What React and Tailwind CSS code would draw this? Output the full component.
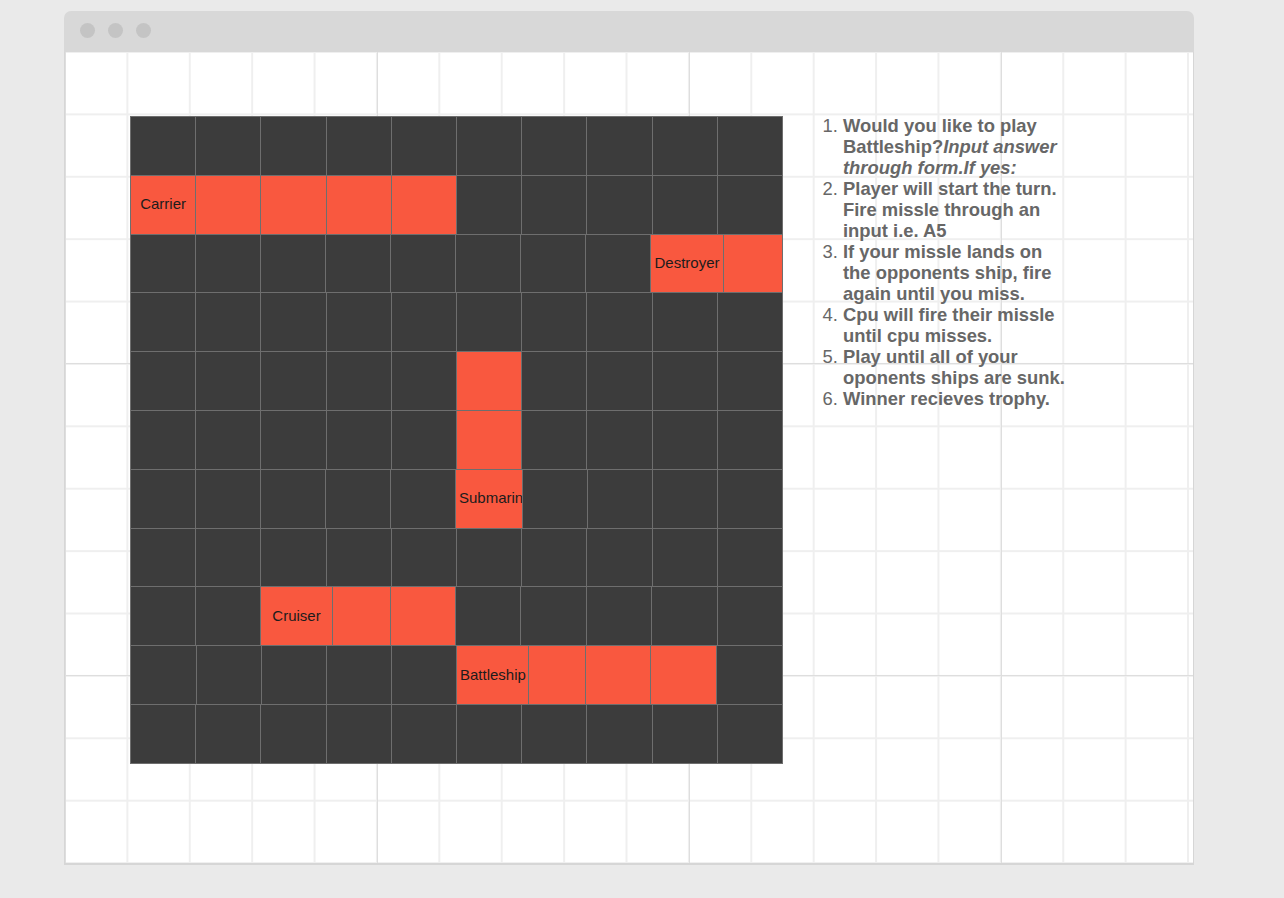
import React from "react";

const F = "flex-1";
const R = (w, label) => ({ w, red: true, label });
const D = (w) => ({ w, red: false });

const plain = () => Array.from({ length: 10 }, () => D(F));
const withRed = (cols) =>
  Array.from({ length: 10 }, (_, i) => (cols.includes(i) ? R(F) : D(F)));

const rows = [
  plain(),
  [R(F, "Carrier"), R(F), R(F), R(F), R(F), D(F), D(F), D(F), D(F), D(F)],
  [
    D("w-[65px]"), D("w-[65px]"), D("w-[65px]"), D("w-[65px]"),
    D("w-[65px]"), D("w-[65px]"), D("w-[65px]"), D("w-[65px]"),
    R("w-[73px]", "Destroyer"), R(F),
  ],
  plain(),
  withRed([5]),
  withRed([5]),
  [
    D("w-[65px]"), D("w-[65px]"), D("w-[65px]"), D("w-[65px]"), D("w-[65px]"),
    R("w-[67px]", "Submarine"), D(F), D(F), D(F), D(F),
  ],
  plain(),
  [
    D("w-[65px]"), D("w-[65px]"), R("w-[72px]", "Cruiser"), R("w-[58px]"),
    R("w-[65px]"), D(F), D(F), D(F), D(F), D(F),
  ],
  [
    D("w-[66px]"), D("w-[65px]"), D("w-[65px]"), D("w-[65px]"), D("w-[65px]"),
    R("w-[72px]", "Battleship"), R("w-[57px]"), R("w-[65px]"), R("w-[66px]"), D(F),
  ],
  plain(),
];

function Board() {
  return (
    <div className="w-[653px] shrink-0 border-l border-t border-[#6e6e6e]">
      {rows.map((row, ri) => (
        <div key={ri} className="flex h-[58.8px]">
          {row.map((c, ci) => (
            <div
              key={ci}
              className={
                c.w +
                " min-w-0 shrink-0 flex items-center overflow-hidden px-[3px] pb-[2px] border-r border-b border-[#6e6e6e] " +
                (c.red ? "bg-[#f9583f]" : "bg-[#3c3c3c]")
              }
            >
              {c.label ? (
                <span className="w-full text-center whitespace-nowrap text-[15px] leading-[17px] text-[#1c1c1c]">
                  {c.label}
                </span>
              ) : null}
            </div>
          ))}
        </div>
      ))}
    </div>
  );
}

function Rules() {
  return (
    <ol className="list-decimal ml-[60px] -mt-px w-[226px] text-[18.4px] leading-[21px] text-[#676767]">
      <li>
        <b>
          Would you like to play Battleship?<i>Input answer through form.If yes:</i>
        </b>
      </li>
      <li>
        <b>Player will start the turn. Fire missle through an input i.e. A5</b>
      </li>
      <li>
        <b>If your missle lands on the opponents ship, fire again until you miss.</b>
      </li>
      <li>
        <b>Cpu will fire their missle until cpu misses.</b>
      </li>
      <li>
        <b>Play until all of your oponents ships are sunk.</b>
      </li>
      <li>
        <b>Winner recieves trophy.</b>
      </li>
    </ol>
  );
}

export default function App() {
  return (
    <div className="min-h-[898px] bg-[#eaeaea] pt-[11px] pl-[64px] font-['Liberation_Sans',Arial,sans-serif]">
      <div className="w-[1130px] rounded-t-[7px] overflow-hidden">
        <div className="h-[41px] bg-[#d8d8d8] flex items-center gap-[13px] pl-[16px] pb-[2px]">
          <span className="w-[15px] h-[15px] rounded-full bg-[#c4c4c4]" />
          <span className="w-[15px] h-[15px] rounded-full bg-[#c4c4c4]" />
          <span className="w-[15px] h-[15px] rounded-full bg-[#c4c4c4]" />
        </div>
        <div className="h-[813px] bg-white border-x border-b-2 border-[#d6d6d6] pl-[65px] pt-[64px] flex items-start [background-image:linear-gradient(to_right,#dedede_1px,transparent_1px),linear-gradient(to_bottom,#dedede_1px,transparent_1px),linear-gradient(to_right,#efefef_2px,transparent_2px),linear-gradient(to_bottom,#efefef_2px,transparent_2px)] [background-size:312px_312px,312px_312px,62.4px_62.4px,62.4px_62.4px] [background-position:0_0,0_-1px,-1px_-1px,-1px_-1px]">
          <Board />
          <Rules />
        </div>
      </div>
    </div>
  );
}
